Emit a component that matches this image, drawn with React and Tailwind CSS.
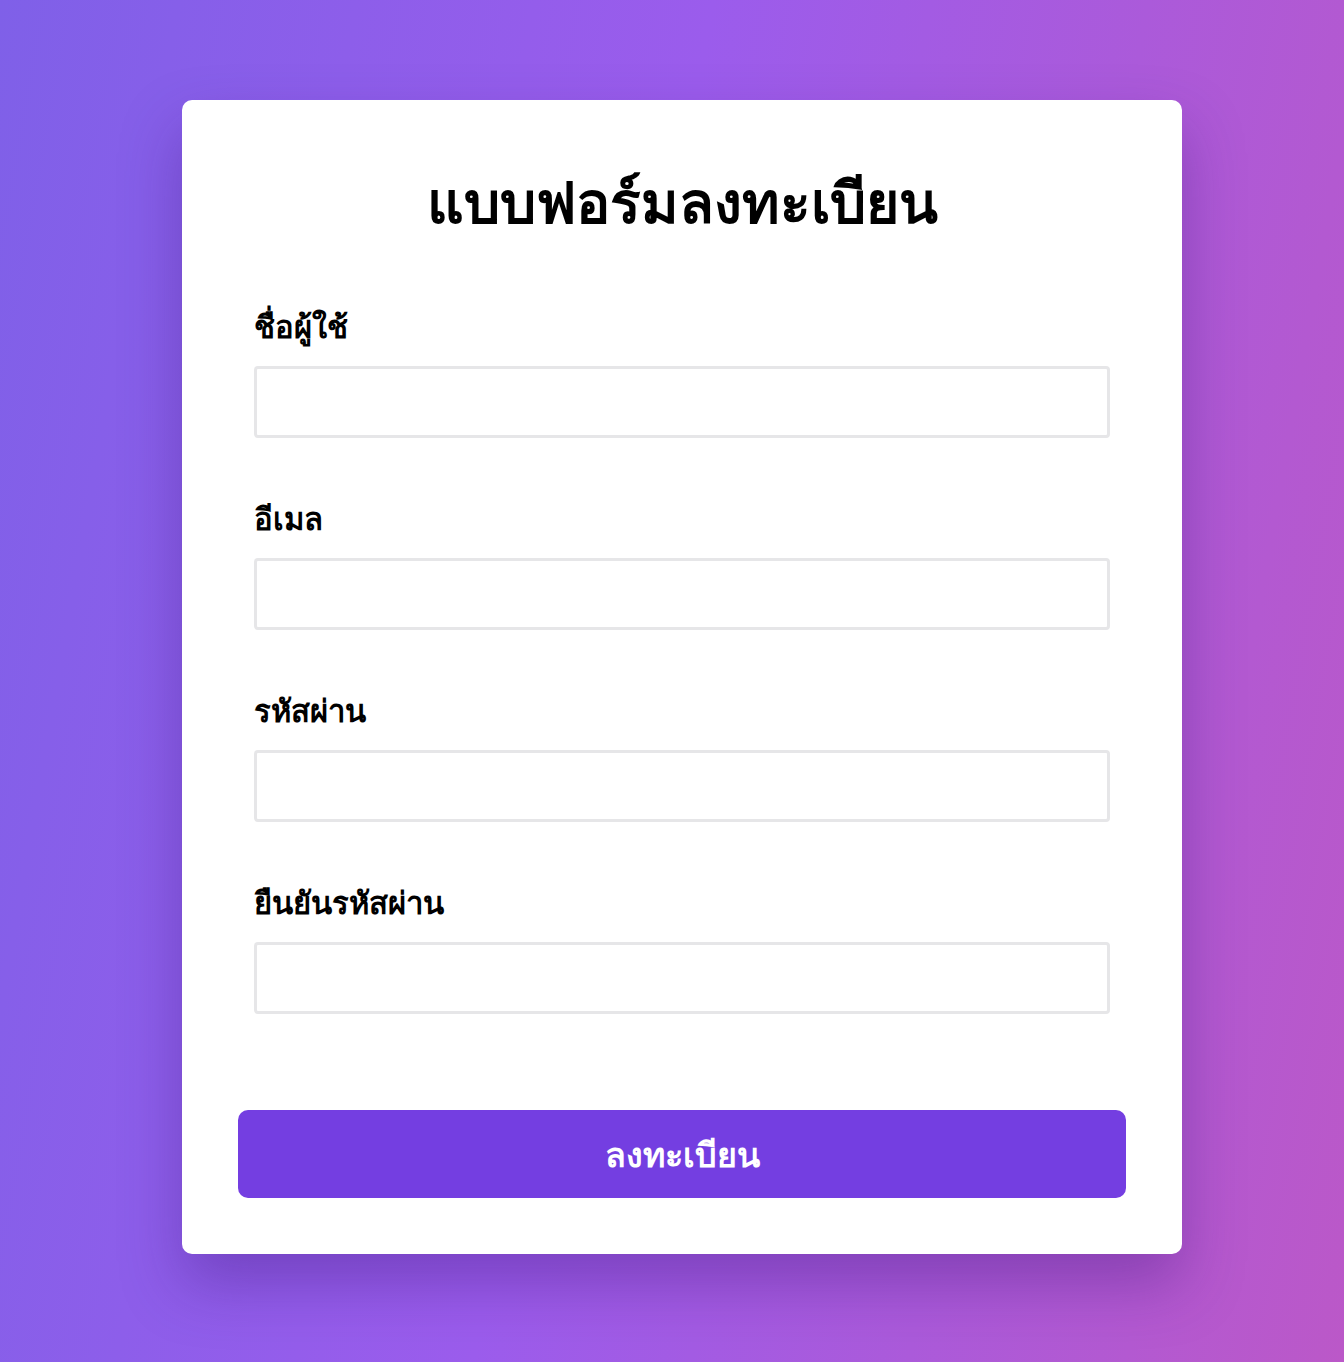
import React from 'react'

const fields = [
  { label: 'ชื่อผู้ใช้', type: 'text' },
  { label: 'อีเมล', type: 'email' },
  { label: 'รหัสผ่าน', type: 'password' },
  { label: 'ยืนยันรหัสผ่าน', type: 'password' }
]

function App() {
  return (
    <div
      className="min-h-screen w-full pl-5 pt-[100px] pb-[108px] bg-[linear-gradient(100deg,#7f60e8_0%,#9b5cec_45%,#bb58c8_100%)]"
      style={{ fontFamily: '"Noto Sans", "DejaVu Sans", sans-serif' }}
    >
      <div className="mx-auto w-[1000px] rounded-[10px] bg-white p-14 shadow-[0_30px_60px_rgba(60,20,120,0.35)]">
        <h1 className="text-center text-[57px] font-bold leading-[90px] text-black">
          แบบฟอร์มลงทะเบียน
        </h1>

        <form className="mt-[56px]" onSubmit={(e) => e.preventDefault()}>
          {fields.map((field) => (
            <div key={field.label} className="px-4 pb-[56px]">
              <label className="block text-[31px] font-bold leading-[48px] text-black">
                {field.label}
              </label>
              <input
                type={field.type}
                className="mt-[16px] block h-[72px] w-full rounded-[4px] border-[3px] border-[#e6e6e8] bg-white px-4 text-2xl outline-none"
              />
            </div>
          ))}

          <button
            type="submit"
            className="mt-[40px] h-[88px] w-full rounded-[10px] bg-[#743ee1] text-[34px] font-bold text-white"
          >
            ลงทะเบียน
          </button>
        </form>
      </div>
    </div>
  )
}

export default App
